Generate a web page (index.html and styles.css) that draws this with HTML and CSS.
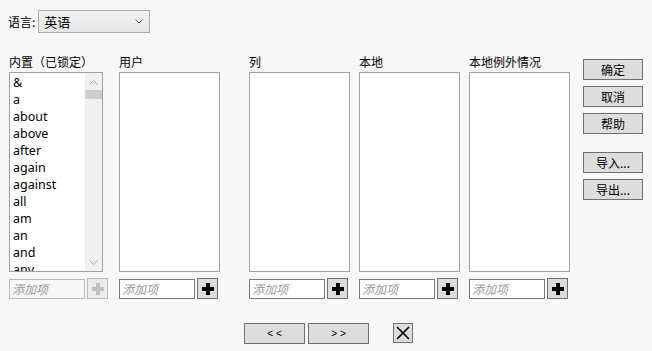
FILE: index.html
```html
<!DOCTYPE html>
<html>
<head>
    <title>停用词</title>
    <link rel="stylesheet" href="styles.css">
</head>
<body>
<div class="langRow">
    <span class="langLabel">语言:</span>
    <div class="select">
        <span>英语</span>
        <svg class="chev" width="8" height="5" viewBox="0 0 8 5"><path d="M0.5 0.5 L4 4 L7.5 0.5" fill="none" stroke="#555" stroke-width="1"/></svg>
    </div>
</div>

<div class="main">
    <div class="col">
        <div class="colLabel">内置（已锁定）</div>
        <div class="list builtin">
            <div class="items">
                <div>&amp;</div>
                <div>a</div>
                <div>about</div>
                <div>above</div>
                <div>after</div>
                <div>again</div>
                <div>against</div>
                <div>all</div>
                <div>am</div>
                <div>an</div>
                <div>and</div>
                <div>any</div>
            </div>
            <div class="scroll">
                <svg class="arrow" width="9" height="5" viewBox="0 0 9 5"><path d="M0.5 4.5 L4.5 0.5 L8.5 4.5" fill="none" stroke="#a8a8a8" stroke-width="1"/></svg>
                <div class="thumb"></div>
                <div class="track"></div>
                <svg class="arrow" width="9" height="5" viewBox="0 0 9 5"><path d="M0.5 0.5 L4.5 4.5 L8.5 0.5" fill="none" stroke="#a8a8a8" stroke-width="1"/></svg>
            </div>
        </div>
        <div class="addRow">
            <input class="addInput" type="text" placeholder="添加项" disabled>
            <button class="plus disabled"><span class="cross"></span></button>
        </div>
    </div>
    <div class="col">
        <div class="colLabel">用户</div>
        <div class="list"></div>
        <div class="addRow">
            <input class="addInput" type="text" placeholder="添加项">
            <button class="plus"><span class="cross"></span></button>
        </div>
    </div>
    <div class="col wide">
        <div class="colLabel">列</div>
        <div class="list"></div>
        <div class="addRow">
            <input class="addInput" type="text" placeholder="添加项">
            <button class="plus"><span class="cross"></span></button>
        </div>
    </div>
    <div class="col">
        <div class="colLabel">本地</div>
        <div class="list"></div>
        <div class="addRow">
            <input class="addInput" type="text" placeholder="添加项">
            <button class="plus"><span class="cross"></span></button>
        </div>
    </div>
    <div class="col">
        <div class="colLabel">本地例外情况</div>
        <div class="list"></div>
        <div class="addRow">
            <input class="addInput" type="text" placeholder="添加项">
            <button class="plus"><span class="cross"></span></button>
        </div>
    </div>
    <div class="side">
        <button class="btn">确定</button>
        <button class="btn">取消</button>
        <button class="btn">帮助</button>
        <button class="btn gapTop">导入...</button>
        <button class="btn">导出...</button>
    </div>
</div>

<div class="nav">
    <button class="btn navBtn">&lt; &lt;</button>
    <button class="btn navBtn">&gt; &gt;</button>
    <button class="btn closeBtn">
        <svg width="14" height="14" viewBox="0 0 14 14"><path d="M1 1 L13 13 M13 1 L1 13" stroke="#000" stroke-width="1.6"/></svg>
    </button>
</div>
</body>
</html>
```

FILE: styles.css
```css
body {
    margin: 0;
    background: #f7f7f7;
    font-family: "Noto Sans CJK SC", "Noto Sans", sans-serif;
    font-size: 12px;
    color: #000;
}
.langRow {
    display: flex;
    align-items: center;
    padding: 10px 0 0 8px;
    height: 23px;
}
.langLabel {
    margin-right: 3px;
}
.select {
    box-sizing: border-box;
    width: 112px;
    height: 23px;
    border: 1px solid #acacac;
    background: linear-gradient(#f2f2f2, #e6e6e6);
    display: flex;
    align-items: center;
    justify-content: space-between;
    padding: 0 6px 0 5px;
    font-size: 13px;
}
.chev {
    display: block;
}
.main {
    display: flex;
    align-items: flex-start;
    padding: 21px 0 0 9px;
}
.col {
    width: 101px;
    margin-right: 9px;
}
.col.wide {
    margin-left: 20px;
}
.colLabel {
    height: 18px;
    line-height: 16px;
    white-space: nowrap;
}
.list {
    box-sizing: border-box;
    width: 101px;
    height: 200px;
    border: 1px solid #a0a0a0;
    background: #fff;
}
.list.builtin {
    width: 94px;
    display: flex;
    overflow: hidden;
}
.items {
    flex: 1;
    padding: 1px 0 0 3px;
    font-family: "Noto Sans", sans-serif;
    font-size: 12.5px;
    line-height: 17px;
    overflow: hidden;
}
.scroll {
    width: 17px;
    background: #f0f0f0;
    display: flex;
    flex-direction: column;
    align-items: center;
}
.arrow {
    display: block;
    margin: 7px 0 5px;
}
.scroll .arrow:last-child {
    margin: 5px 0 6px;
}
.thumb {
    width: 17px;
    height: 9px;
    background: #cdcdcd;
}
.track {
    flex: 1;
}
.addRow {
    display: flex;
    align-items: center;
    margin-top: 6px;
}
.addInput {
    box-sizing: border-box;
    width: 76px;
    height: 20px;
    margin: 0 2px 0 0;
    padding: 0 2px;
    border: 1px solid #7a7a7a;
    background: #fff;
    font-family: "Noto Sans CJK SC", sans-serif;
    font-size: 12px;
    outline: none;
}
.addInput::placeholder {
    color: #9a9a9a;
    font-style: italic;
}
.addInput:disabled {
    border-color: #bcbcbc;
    background: #f7f7f7;
}
.plus {
    box-sizing: border-box;
    width: 21px;
    height: 21px;
    padding: 0;
    border: 1px solid #707070;
    background: #dcdcdc;
    display: flex;
    align-items: center;
    justify-content: center;
}
.cross {
    position: relative;
    width: 12px;
    height: 12px;
}
.cross::before,
.cross::after {
    content: "";
    position: absolute;
    background: #000;
}
.cross::before {
    left: 4px;
    top: 0;
    width: 4px;
    height: 12px;
}
.cross::after {
    left: 0;
    top: 4px;
    width: 12px;
    height: 4px;
}
.plus.disabled {
    border-color: #bcbcbc;
    background: #ececec;
}
.plus.disabled .cross::before,
.plus.disabled .cross::after {
    background: #c0c0c0;
}
.side {
    display: flex;
    flex-direction: column;
    margin: 5px 0 0 4px;
}
.btn {
    box-sizing: border-box;
    width: 60px;
    height: 21px;
    margin: 0 0 6px 0;
    padding: 0;
    border: 1px solid #707070;
    background: #dddddd;
    font-family: "Noto Sans CJK SC", sans-serif;
    font-size: 12px;
    line-height: 18px;
    color: #000;
}
.btn.gapTop {
    margin-top: 12px;
}
.nav {
    display: flex;
    align-items: flex-start;
    padding: 24px 0 0 244px;
}
.navBtn {
    width: 61px;
    margin: 0 3px 0 0;
    font-family: "Liberation Sans", sans-serif;
    font-size: 10px;
    letter-spacing: 0;
}
.nav .navBtn + .navBtn {
    margin-right: 24px;
}
.closeBtn {
    width: 20px;
    height: 20px;
    margin: 0;
    display: flex;
    align-items: center;
    justify-content: center;
}
```
